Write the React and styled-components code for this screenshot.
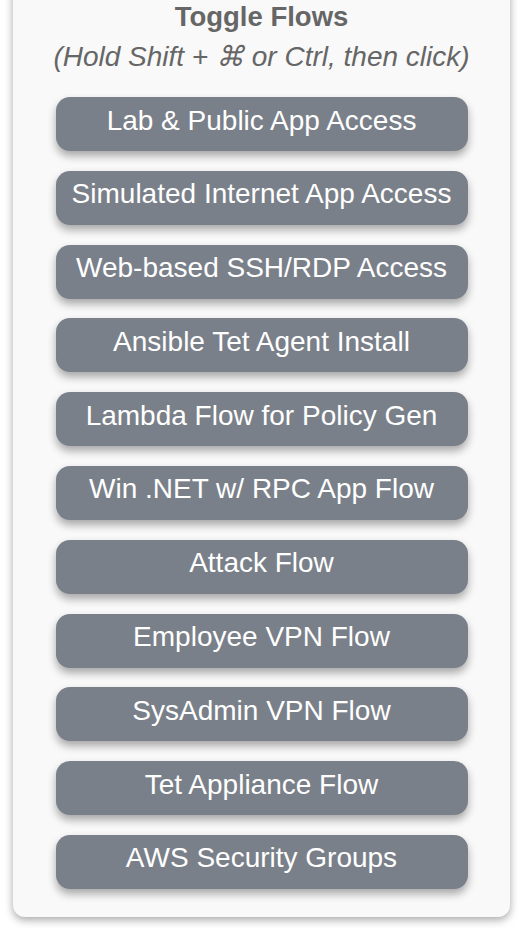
import React from "react"
import styled, { createGlobalStyle } from "styled-components"

const GlobalStyle = createGlobalStyle`
  html, body {
    margin: 0;
    padding: 0;
    background: #ffffff;
    font-family: "Liberation Sans", Arial, sans-serif;
  }
`

const Page = styled.div`
  padding: 0 14px 12px 13px;
`

const Panel = styled.div`
  margin-top: -20px;
  padding: 20px 0 28px;
  background: #f9f9f9;
  border-radius: 12px;
  box-shadow: 0 3px 9px rgba(0, 0, 0, 0.35);
  display: flex;
  flex-direction: column;
  align-items: center;
`

const Title = styled.div`
  font-size: 27.5px;
  font-weight: bold;
  color: #666666;
  line-height: 32px;
  margin-top: 1px;
`

const Hint = styled.div`
  font-size: 28px;
  font-style: italic;
  color: #666666;
  line-height: 36px;
  margin-top: 6px;
  margin-bottom: 22px;
`

const List = styled.div`
  display: flex;
  flex-direction: column;
  gap: 19.8px;
`

const FlowButton = styled.button`
  width: 412px;
  height: 54px;
  border: none;
  border-radius: 14px;
  background: #7a8089;
  color: #ffffff;
  font-family: "Liberation Sans", Arial, sans-serif;
  font-size: 28px;
  padding: 0 0 7px;
  box-shadow: 0 5px 8px rgba(0, 0, 0, 0.33);
  cursor: pointer;
`

const flows = [
  "Lab & Public App Access",
  "Simulated Internet App Access",
  "Web-based SSH/RDP Access",
  "Ansible Tet Agent Install",
  "Lambda Flow for Policy Gen",
  "Win .NET w/ RPC App Flow",
  "Attack Flow",
  "Employee VPN Flow",
  "SysAdmin VPN Flow",
  "Tet Appliance Flow",
  "AWS Security Groups",
]

const App = () => {
  return (
    <Page>
      <GlobalStyle />
      <Panel>
        <Title>Toggle Flows</Title>
        <Hint>(Hold Shift + ⌘ or Ctrl, then click)</Hint>
        <List>
          {flows.map((f) => (
            <FlowButton key={f}>{f}</FlowButton>
          ))}
        </List>
      </Panel>
    </Page>
  )
}

export default App
